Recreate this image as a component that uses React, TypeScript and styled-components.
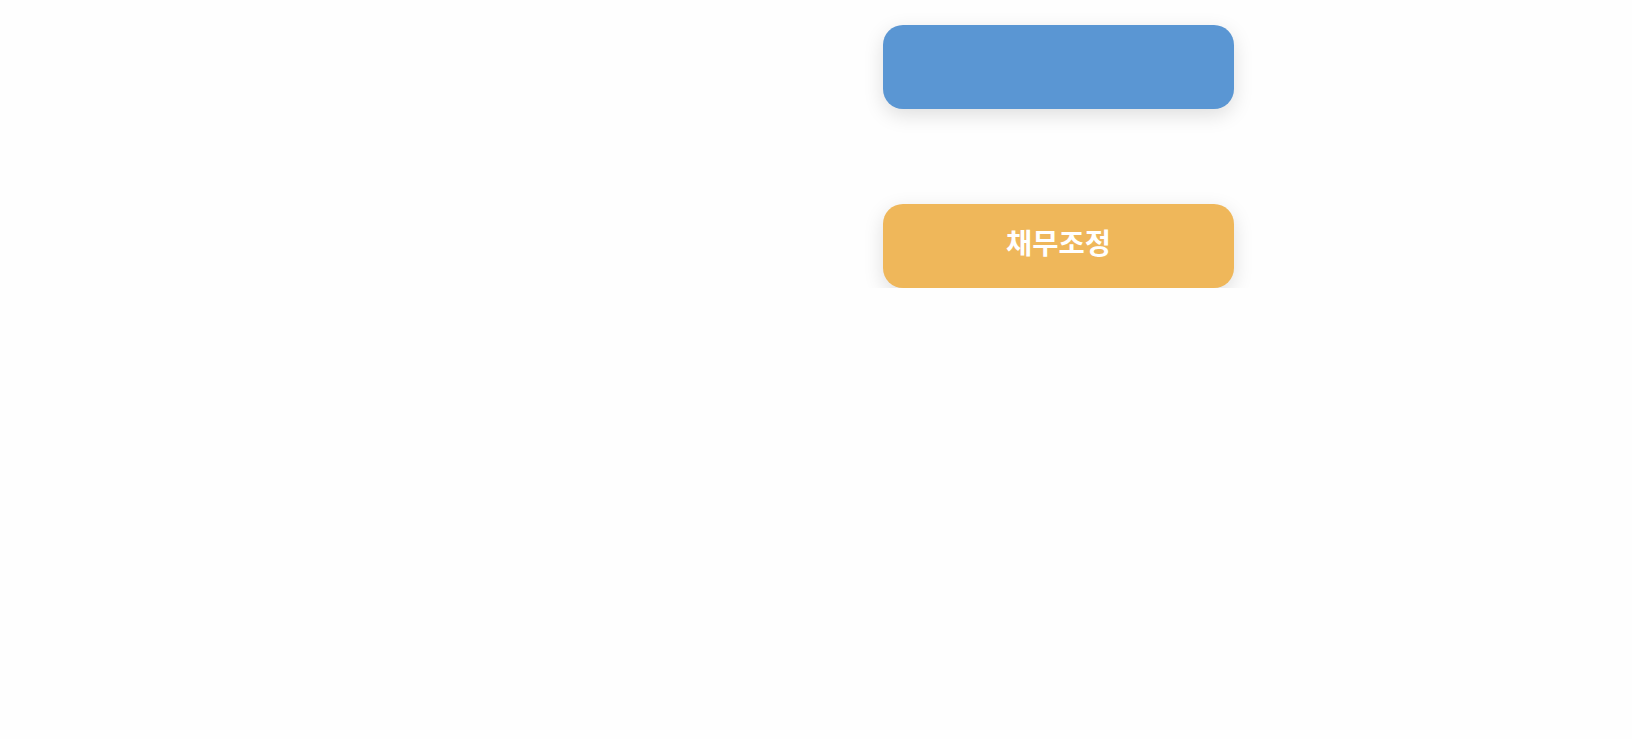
import React from "react";
import styled, { createGlobalStyle } from "styled-components";

const Global = createGlobalStyle`
  html, body { margin: 0; padding: 0; background: #fefefe; }
  body { font-family: "Noto Sans CJK KR", "Noto Sans", sans-serif; }
`;

const Page = styled.div`
  display: flex;
  flex-direction: column;
  align-items: flex-start;
  gap: 95px;
  padding: 25px 0 0 883px;
`;

const ActionButton = styled.button<{ $color: string }>`
  width: 351px;
  height: 84px;
  border: none;
  border-radius: 20px;
  background: ${(p) => p.$color};
  box-shadow: 0 6px 20px rgba(0, 0, 0, 0.13);
  color: #ffffff;
  font-family: "Noto Sans CJK KR", "Noto Sans", sans-serif;
  font-weight: 700;
  font-size: 28.5px;
  display: flex;
  align-items: center;
  justify-content: center;
  padding: 0 0 10px;
  cursor: pointer;
`;

export default function App() {
  return (
    <>
      <Global />
      <Page>
        <ActionButton $color="#5a96d3" />
        <ActionButton $color="#efb75a">채무조정</ActionButton>
      </Page>
    </>
  );
}
